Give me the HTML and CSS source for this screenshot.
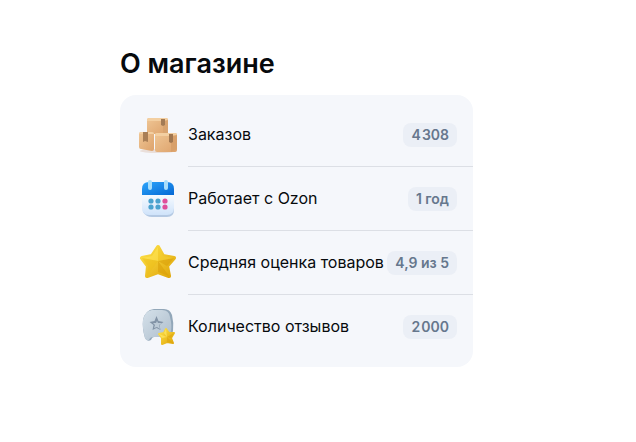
FILE: index.html
```html
<!DOCTYPE html>
<html lang="ru">
<head>
    <meta charset="UTF-8">
    <meta name="viewport" content="width=device-width, initial-scale=1.0">
    <title>О магазине</title>
    <link rel="stylesheet" href="styles.css">
</head>
<body>
    <section class="shop">
        <h2 class="shop-title">О магазине</h2>
        <ul class="shop-card">
            <li class="row">
                <!-- Коробки -->
                <svg class="icon" viewBox="0 0 40 40" aria-hidden="true">
                    <defs>
                        <linearGradient id="box" x1="0" y1="0" x2="1" y2="1">
                            <stop offset="0" stop-color="#efc695"/>
                            <stop offset="1" stop-color="#dda26b"/>
                        </linearGradient>
                    </defs>
                    <ellipse cx="20" cy="36" rx="18" ry="2" fill="#eadfda"/>
                    <rect x="9" y="3" width="21" height="16" rx="2" fill="url(#box)"/>
                    <path d="M25 5l5-1v14l-5 1z" fill="#d9a470"/>
                    <path d="M9 5q0-2 2-2h17q2 0 2 2l-5 1H9z" fill="#f3cfa1"/>
                    <path d="M23 4h4v6l-2 1-2-1z" fill="#a37b55"/>
                    <path d="M1 19q0-2 2-2h11q2 0 2 2v15q0 2-2 2l-11-2q-2 0-2-2z" fill="url(#box)"/>
                    <path d="M1 19q0-2 2-2h11q2 0 2 2v0H1z" fill="#f3cfa1"/>
                    <path d="M5 17h5v10l-3-1-2 1z" fill="#aa7f56"/>
                    <rect x="17" y="18" width="22" height="19" rx="2" fill="url(#box)"/>
                    <path d="M33 20l6-1v15l-6 3z" fill="#d8a06a"/>
                    <path d="M17 20q0-2 2-2h18q2 0 2 2l-6 1H17z" fill="#f3cfa1"/>
                    <path d="M31 19h4v8l-2 1-2-1z" fill="#a0764f"/>
                </svg>
                <span class="name">Заказов</span>
                <span class="badge">4&#8202;308</span>
            </li>
            <li class="row">
                <!-- Календарь -->
                <svg class="icon" viewBox="0 0 40 40" aria-hidden="true">
                    <defs>
                        <linearGradient id="head" x1="0" y1="0" x2="1" y2="1">
                            <stop offset="0" stop-color="#2ba5fb"/>
                            <stop offset="1" stop-color="#0668d4"/>
                        </linearGradient>
                        <linearGradient id="sheet" x1="0" y1="0" x2="0" y2="1">
                            <stop offset="0" stop-color="#fbfdff"/>
                            <stop offset="1" stop-color="#cfe3fa"/>
                        </linearGradient>
                    </defs>
                    <path d="M4 14h32v17q0 7-7 7H14q-6 0-9-5z" fill="#b4c9e3"/>
                    <path d="M4 14h32v15q0 7-7 7H11q-7 0-7-7z" fill="url(#sheet)"/>
                    <path d="M4 16v-6q0-7 7-7h18q7 0 7 7v6z" fill="url(#head)"/>
                    <rect x="10" y="1" width="4" height="10" rx="2" fill="#a7defb"/>
                    <rect x="26" y="1" width="4" height="10" rx="2" fill="#a7defb"/>
                    <g fill="#4ba3cf">
                        <circle cx="13" cy="22" r="2.6"/>
                        <circle cx="20" cy="22" r="2.6"/>
                        <circle cx="13" cy="28" r="2.6"/>
                        <circle cx="20" cy="28" r="2.6"/>
                    </g>
                    <g fill="#df4f9b">
                        <circle cx="27" cy="22" r="2.6"/>
                        <circle cx="27" cy="28" r="2.6"/>
                    </g>
                </svg>
                <span class="name">Работает с Ozon</span>
                <span class="badge">1 год</span>
            </li>
            <li class="row">
                <!-- Звезда -->
                <svg class="icon" viewBox="0 0 40 40" aria-hidden="true">
                    <defs>
                        <linearGradient id="gold" x1="0" y1="0" x2="1" y2="1">
                            <stop offset="0" stop-color="#ffe34a"/>
                            <stop offset="1" stop-color="#dfa509"/>
                        </linearGradient>
                    </defs>
                    <path d="M20 4l5 9 11 2-7 8 2 10-11-4-11 4 1-10-6-8 10-2z" fill="url(#gold)" stroke="url(#gold)" stroke-width="4" stroke-linejoin="round"/>
                    <path d="M20 18V4l-6 9-10 2z" fill="#ffe454" opacity=".6"/>
                    <path d="M20 18L36 15l-7 8zM20 18l11 15-11-4z" fill="#d79c06" opacity=".5"/>
                    <path d="M20 18L9 33l1-10-6-8z" fill="#edbf17" opacity=".5"/>
                    <path d="M20 18V4l5 9 11 2z" fill="#f6d02c" opacity=".5"/>
                </svg>
                <span class="name">Средняя оценка товаров</span>
                <span class="badge">4,9 из 5</span>
            </li>
            <li class="row">
                <!-- Отзыв со звездой -->
                <svg class="icon" viewBox="0 0 40 40" aria-hidden="true">
                    <defs>
                        <linearGradient id="bubble" x1="0" y1="0" x2="1" y2="1">
                            <stop offset="0" stop-color="#d5e1ea"/>
                            <stop offset="1" stop-color="#adbdcc"/>
                        </linearGradient>
                    </defs>
                    <path d="M16 2h10q6 0 8 6 2 8 1 16-1 6-7 6H16q-2 0-3 3-4 2-6-2Q4 21 5 13 7 3 16 2z" fill="#92a7b9"/>
                    <path d="M14 3h10q7 0 8 7 2 8 1 14-1 6-7 6H15q-3 0-4 3-3 1-4-2Q4 20 5 13 7 4 14 3z" fill="url(#bubble)"/>
                    <path d="M18.500 9l2 5 5 1-4 3 1 5-4-2-4 2 1-5-4-3 5-1z" fill="#8293a6"/>
                    <path d="M19 14l1 2 4 0-3 2 1 4-3-2-3 1 1-3-2-2 3 0z" fill="#bccad6"/>
                    <path d="M28 22l3 4 5 0-3 5 2 5-6-1-5 2 0-6-3-4 5-1z" fill="url(#gold)" stroke="url(#gold)" stroke-width="2" stroke-linejoin="round"/>
                    <path d="M29 30l7-4-3 5zM29 30l6 6-6-1z" fill="#dca50f" opacity=".6"/>
                    <path d="M29 30l-1-8-2 4zM29 30l-8-3 3 4z" fill="#ffe565" opacity=".7"/>
                </svg>
                <span class="name">Количество отзывов</span>
                <span class="badge">2&#8202;000</span>
            </li>
        </ul>
    </section>
</body>
</html>
```

FILE: styles.css
```css
body {
    margin: 0;
    padding: 48px 120px;
    background-color: #fff;
    color: #070a0d;
    font-family: Inter, "Open Sans", sans-serif;
}
.shop {
    max-width: 353px;
}
.shop-title {
    margin: 0 0 15px;
    font-size: 27px;
    line-height: 32px;
    font-weight: 600;
}
.shop-card {
    margin: 0;
    padding: 8px 0;
    list-style: none;
    background-color: #f5f7fb;
    border-radius: 16px;
}
/* Строка: иконка, название, значение */
.row {
    display: flex;
    align-items: center;
    position: relative;
    height: 64px;
    padding: 0 16px 0 18px;
}
.row:not(:last-child)::after {
    content: "";
    position: absolute;
    left: 68px;
    right: 0;
    bottom: 0;
    height: 1px;
    background-color: #dcdfe5;
}
.icon {
    flex: none;
    width: 40px;
    height: 40px;
    margin-right: 10px;
}
.name {
    padding-bottom: 2px;
    font-size: 16px;
    line-height: 20px;
    white-space: nowrap;
}
.badge {
    margin-left: auto;
    padding: 0 8px;
    border-radius: 8px;
    background-color: #ebeff6;
    color: #66778d;
    font-size: 14px;
    line-height: 24px;
    font-weight: 600;
    white-space: nowrap;
}
```
